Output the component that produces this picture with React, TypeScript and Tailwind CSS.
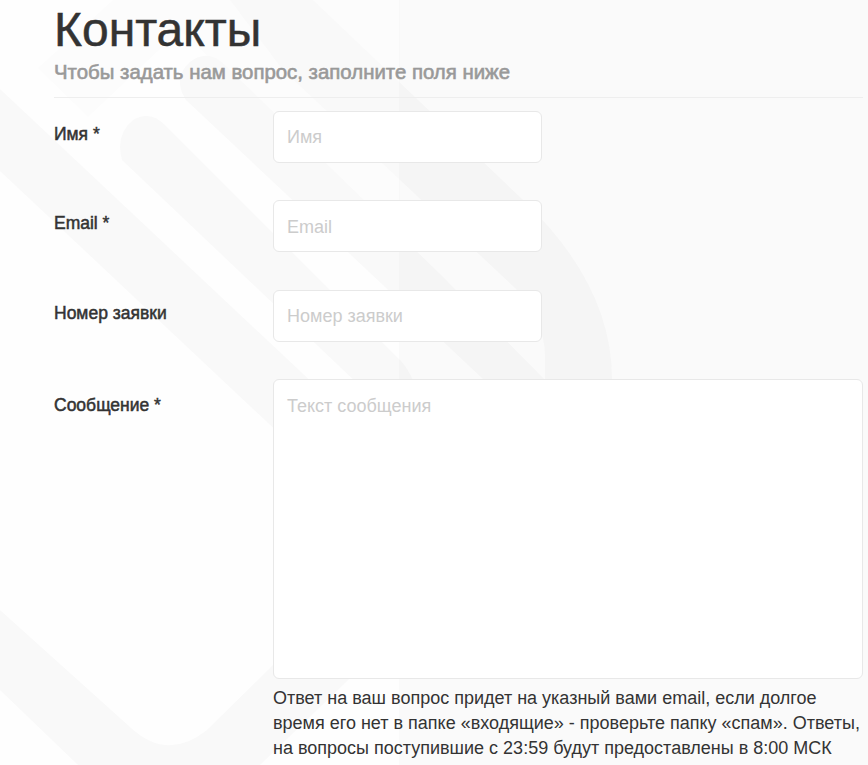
const fields = [
  { label: 'Имя *', placeholder: 'Имя', gap: 'mb-[37px]', inputPad: '' },
  { label: 'Email *', placeholder: 'Email', gap: 'mb-[38px]', inputPad: 'pt-[2px]' },
  { label: 'Номер заявки', placeholder: 'Номер заявки', gap: 'mb-[37px]', inputPad: '' },
];

function Background() {
  return (
    <svg className="absolute inset-0 w-full h-full" viewBox="0 0 868 765" aria-hidden="true">
      <rect width="868" height="765" fill="#fefefe" />
      {/* top chevron */}
      <path d="M113 0L38 68L88 117L180 30L400 236L400 0Z" fill="#fcfcfc" />
      {/* diagonal bands */}
      <path d="M0 89L400 465L400 547L0 171Z" fill="#f9f9f9" />
      <path d="M133 120Q115 135 122 160L400 424L420 400Q412 372 400 360L165 125Q150 110 133 120Z" fill="#f9f9f9" />
      <path d="M190 62Q172 78 186 100L500 395L560 395L440 274L225 65Q208 48 190 62Z" fill="#f9f9f9" />
      <path d="M313 0L523 200Q612 285 612 379L612 400L545 400L545 357Q545 320 515 288L283 70L230 0Z" fill="#f9f9f9" />
      {/* bottom chevron */}
      <path d="M0 610L130 727Q167 762 207 730L400 540L400 630L260 765L78 765L0 690Z" fill="#f9f9f9" />
      <rect x="399" width="469" height="765" fill="#000" fillOpacity="0.016" />
    </svg>
  );
}

export default function App() {
  return (
    <div className="relative h-[765px] overflow-hidden font-['Liberation_Sans',Arial,sans-serif] text-[#333]">
      <Background />
      <div className="relative pl-[54px] pr-[5px]">
        <div className="border-b border-[#eeeeee] h-[98px]">
          <h1 className="text-[48px] leading-[56px] pt-[2px] text-[#333] [-webkit-text-stroke:0.5px_#333]">Контакты</h1>
          <p className="text-[20.4px] leading-[24px] mt-[2px] text-[#999] [-webkit-text-stroke:0.6px_#999]">Чтобы задать нам вопрос, заполните поля ниже</p>
        </div>
        <div className="mt-[13px]">
          {fields.map(f => (
            <div key={f.label} className={`flex ${f.gap}`}>
              <label className="w-[219px] text-[17.5px] leading-[22px] pt-[12px] [-webkit-text-stroke:0.5px_#333]">{f.label}</label>
              <input
                placeholder={f.placeholder}
                className={`w-[269px] h-[52px] bg-white border border-[#e8e8e8] rounded-[6px] px-[13px] text-[18px] placeholder:text-[#cccccc] ${f.inputPad}`}
              />
            </div>
          ))}
          <div className="flex">
            <label className="w-[219px] text-[17.5px] leading-[22px] pt-[15px] [-webkit-text-stroke:0.5px_#333]">Сообщение *</label>
            <div className="flex-1">
              <textarea
                placeholder="Текст сообщения"
                className="block w-full h-[300px] resize-none bg-white border border-[#e8e8e8] rounded-[6px] px-[13px] py-[14px] text-[18px] leading-[24px] placeholder:text-[#cccccc]"
              />
              <p className="mt-[7px] text-[18px] leading-[25px] text-[#333]">
                Ответ на ваш вопрос придет на указный вами email, если долгое время его нет в папке «входящие» - проверьте папку «спам». Ответы, на вопросы поступившие с 23:59 будут предоставлены в 8:00 МСК
              </p>
            </div>
          </div>
        </div>
      </div>
    </div>
  );
}
